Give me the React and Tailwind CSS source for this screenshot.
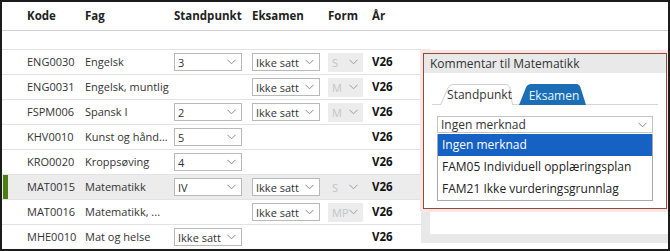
import React from "react";

const rows = [
  { kode: "ENG0030", fag: "Engelsk", sp: "3", ek: true, form: "S" },
  { kode: "ENG0031", fag: "Engelsk, muntlig", sp: null, ek: true, form: "M" },
  { kode: "FSPM006", fag: "Spansk I", sp: "2", ek: true, form: "M" },
  { kode: "KHV0010", fag: "Kunst og hånd...", sp: "5", ek: false, form: null },
  { kode: "KRO0020", fag: "Kroppsøving", sp: "4", ek: false, form: null },
  { kode: "MAT0015", fag: "Matematikk", sp: "IV", ek: true, form: "S", active: true },
  { kode: "MAT0016", fag: "Matematikk, ...", sp: null, ek: true, form: "MP" },
  { kode: "MHE0010", fag: "Mat og helse", sp: "Ikke satt", ek: false, form: null },
];

function Chevron({ className = "" }) {
  return (
    <svg width="9" height="6" viewBox="0 0 9 6" className={className}>
      <path d="M0.5 0.8 L4.5 4.8 L8.5 0.8" fill="none" stroke="#8a8a8a" strokeWidth="1" />
    </svg>
  );
}

function Select({ value, w }) {
  return (
    <div className={`flex h-[18px] items-center justify-between border border-[#b9b9b9] bg-white pl-[3px] pr-[5px] ${w}`}>
      <span className="leading-none">{value}</span>
      <Chevron />
    </div>
  );
}

function FormSelect({ value }) {
  return (
    <div className="flex h-[19px] w-[35px] items-center justify-between bg-[#ececec] pl-[4px] pr-[5px] text-[#c4c4c4]">
      <span className="leading-none">{value}</span>
      <Chevron className="opacity-80" />
    </div>
  );
}

export default function App() {
  return (
    <div className="relative h-[251px] w-[670px] overflow-hidden border-x-2 border-t-2 border-b-2 border-[#1c1c1c] bg-white font-['Open_Sans',sans-serif] text-[11px] text-[#333]">
      {/* header */}
      <div className="flex h-[29px] items-center border-b border-[#cfcfcf] pb-[1px] text-[11.5px] font-bold text-[#222]">
        <div className="w-[83px] pl-[25px]">Kode</div>
        <div className="w-[89px]">Fag</div>
        <div className="w-[78px]">Standpunkt</div>
        <div className="w-[76px]">Eksamen</div>
        <div className="w-[44px]">Form</div>
        <div>År</div>
      </div>
      <div className="h-[19px] border-b border-[#e2e2e2]" />
      {rows.map((r) => (
        <div
          key={r.kode}
          className={`relative flex h-[25px] items-center border-b border-[#e2e2e2] ${r.active ? "bg-[#ececec]" : ""}`}
        >
          {r.active && <div className="absolute left-[1px] top-0 h-full w-[5px] bg-[#4e7d16]" />}
          <div className="w-[83px] pl-[25px]">{r.kode}</div>
          <div className="w-[89px] whitespace-nowrap">{r.fag}</div>
          <div className="w-[78px]">{r.sp && <Select value={r.sp} w="w-[68px]" />}</div>
          <div className="w-[76px]">{r.ek && <Select value="Ikke satt" w="w-[68px]" />}</div>
          <div className="w-[44px]">{r.form && <FormSelect value={r.form} />}</div>
          <div className="text-[11.5px] font-bold text-[#111]">V26</div>
        </div>
      ))}

      {/* comment panel */}
      <div className="absolute left-[419px] top-[47px] flex h-[194px] w-[247px] flex-col bg-[#e8e8e8]">
        <div className="ml-[9px] mb-[9px] flex-1 bg-white" />
      </div>
      <div className="absolute left-[421px] top-[51px] h-[156px] w-[244px] border border-[#8e4f33] bg-white text-[12px] shadow-[0_0_0_3px_#fbe3ea]">
        <div className="flex h-[19px] items-center bg-[#e9e9e9] pl-[6px] text-[#333]">Kommentar til Matematikk</div>
        <div className="relative mx-[8px] mt-[10px] flex h-[22px] items-end border-b border-[#d6d6d6]">
          <div className="relative ml-[8px] flex h-[20px] w-[73px] items-center justify-center pl-[6px] pt-[2px]">
            <svg className="absolute inset-0" width="73" height="21" viewBox="0 0 73 21">
              <path d="M0.5 21 L8 4 Q9.5 0.5 13 0.5 L66 0.5 Q69 0.5 70 4 L72.5 21" fill="white" stroke="#cfcfcf" strokeWidth="1" />
            </svg>
            <span className="relative text-[#333]">Standpunkt</span>
          </div>
          <div className="relative ml-[6px] mb-[-1px] flex h-[21px] w-[67px] items-center justify-center pl-[3px] pt-[2px]">
            <svg className="absolute inset-0" width="67" height="21" viewBox="0 0 67 21">
              <path d="M0 21 L7 3.5 Q8.5 0 12 0 L57 0 Q60.5 0 61.5 3.5 L67 21 Z" fill="#1b6db5" />
            </svg>
            <span className="relative text-[#e4f7ff]">Eksamen</span>
          </div>
        </div>
        <div className="mx-[13px] mt-[11px] flex h-[17px] items-center justify-between border border-[#c4c4c4] pl-[3px] pr-[5px]">
          <span className="leading-none">Ingen merknad</span>
          <Chevron />
        </div>
        <div className="mx-[13px] mt-[1px] flex flex-col border border-[#a9a9a9] border-t-0">
          <div className="flex h-[22px] items-center bg-[#1662c4] pl-[4px] text-white">Ingen merknad</div>
          <div className="flex h-[22px] items-center pl-[4px] text-[#222]">FAM05 Individuell opplæringsplan</div>
          <div className="flex h-[22px] items-center pl-[4px] text-[#222]">FAM21 Ikke vurderingsgrunnlag</div>
        </div>
      </div>
    </div>
  );
}
